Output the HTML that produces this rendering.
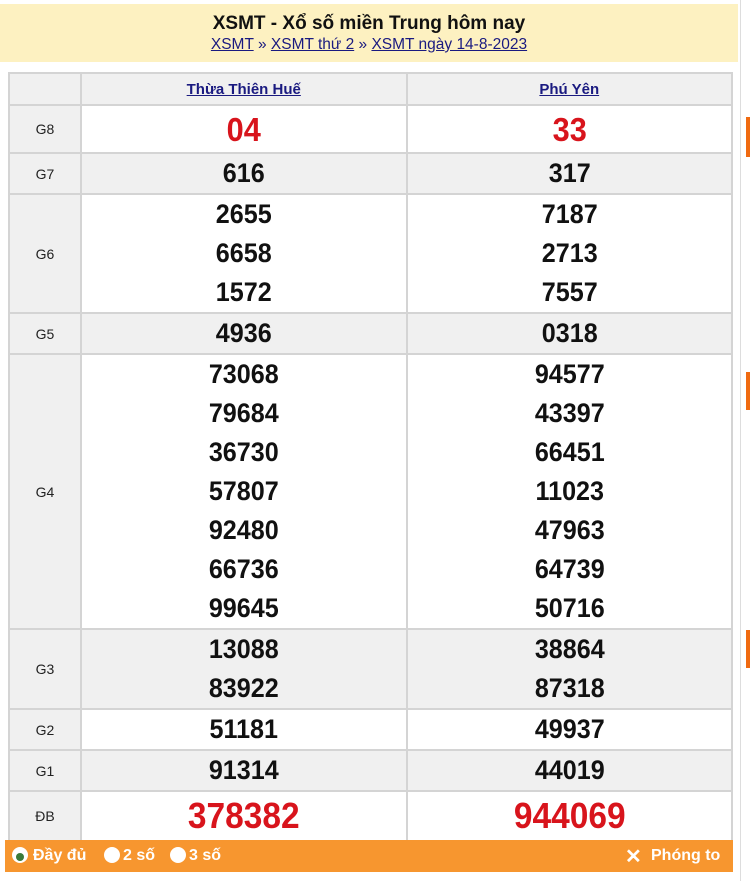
<!DOCTYPE html>
<html><head><meta charset="utf-8"><style>
*{margin:0;padding:0;box-sizing:border-box}
body{width:750px;height:881px;background:#fff;font-family:"Liberation Sans",sans-serif;position:relative;overflow:hidden}
.hdr{position:absolute;left:0;top:4px;width:738px;height:58px;background:#fdf1c1;text-align:center}
.hdr h1{font-size:19px;font-weight:bold;color:#111;margin-top:9px}
.hdr .bc{font-size:15.5px;color:#1a1a80;margin-top:1px}
.hdr .bc u{color:#1a1a80}
.vline{position:absolute;left:740px;top:0;width:1px;height:881px;background:#ddd}
.mark{position:absolute;left:746px;width:4px;background:#f06a10}
table{position:absolute;left:8px;top:72px;width:725px;border-collapse:collapse}
td{border:2px solid #d4d4d4;text-align:center;vertical-align:middle}
td.l{width:72px;font-size:14px;color:#222;background:#f0f0f0}
tr.g td{background:#f0f0f0}
.n{font-size:27px;font-weight:bold;color:#111;line-height:39px;transform:scaleX(.93)}
.r{color:#d8141c}
th{height:32px;font-size:15px;font-weight:bold;color:#1a1a80;text-decoration:underline;background:#f0f0f0;border:2px solid #d4d4d4}
.ft{position:absolute;left:5px;top:840px;width:728px;height:32px;background:#f7962f;color:#fff;font-weight:bold;font-size:16px}
.ft span{position:absolute;top:7px}
.rd{display:inline-block;width:16px;height:16px;border-radius:50%;background:#fff;position:absolute;top:9px}
</style></head><body>
<div class="hdr"><h1>XSMT - Xổ số miền Trung hôm nay</h1>
<div class="bc"><u>XSMT</u> » <u>XSMT thứ 2</u> » <u>XSMT ngày 14-8-2023</u></div></div>
<div class="vline"></div>
<div class="mark" style="top:117px;height:40px"></div>
<div class="mark" style="top:372px;height:38px"></div>
<div class="mark" style="top:630px;height:38px"></div>
<table>
<tr><th style="width:72px"></th><th>Thừa Thiên Huế</th><th>Phú Yên</th></tr>
<tr style="height:48px"><td class="l">G8</td><td><div class="n r" style="font-size:33px">04</div></td><td><div class="n r" style="font-size:33px">33</div></td></tr>
<tr class="g" style="height:41px"><td class="l">G7</td><td><div class="n">616</div></td><td><div class="n">317</div></td></tr>
<tr style="height:119px"><td class="l">G6</td><td><div class="n">2655</div><div class="n">6658</div><div class="n">1572</div></td><td><div class="n">7187</div><div class="n">2713</div><div class="n">7557</div></td></tr>
<tr class="g" style="height:39px"><td class="l">G5</td><td><div class="n">4936</div></td><td><div class="n">0318</div></td></tr>
<tr style="height:274px"><td class="l">G4</td><td><div class="n">73068</div><div class="n">79684</div><div class="n">36730</div><div class="n">57807</div><div class="n">92480</div><div class="n">66736</div><div class="n">99645</div></td><td><div class="n">94577</div><div class="n">43397</div><div class="n">66451</div><div class="n">11023</div><div class="n">47963</div><div class="n">64739</div><div class="n">50716</div></td></tr>
<tr class="g" style="height:80px"><td class="l">G3</td><td><div class="n">13088</div><div class="n">83922</div></td><td><div class="n">38864</div><div class="n">87318</div></td></tr>
<tr style="height:40px"><td class="l">G2</td><td><div class="n">51181</div></td><td><div class="n">49937</div></td></tr>
<tr class="g" style="height:40px"><td class="l">G1</td><td><div class="n">91314</div></td><td><div class="n">44019</div></td></tr>
<tr style="height:50px"><td class="l">ĐB</td><td><div class="n r" style="font-size:36px;line-height:44px">378382</div></td><td><div class="n r" style="font-size:36px;line-height:44px">944069</div></td></tr>
</table>
<div class="ft">
<span class="rd" style="left:7px"></span><span style="left:11px;top:13px;width:8px;height:8px;border-radius:50%;background:#3a7a3a"></span>
<span style="left:28px">Đầy đủ</span>
<span class="rd" style="left:99px"></span><span style="left:118px">2 số</span>
<span class="rd" style="left:165px"></span><span style="left:184px">3 số</span>
<span style="left:620px;font-size:20px;top:4px">✕</span><span style="left:646px">Phóng to</span>
</div>
</body></html>
